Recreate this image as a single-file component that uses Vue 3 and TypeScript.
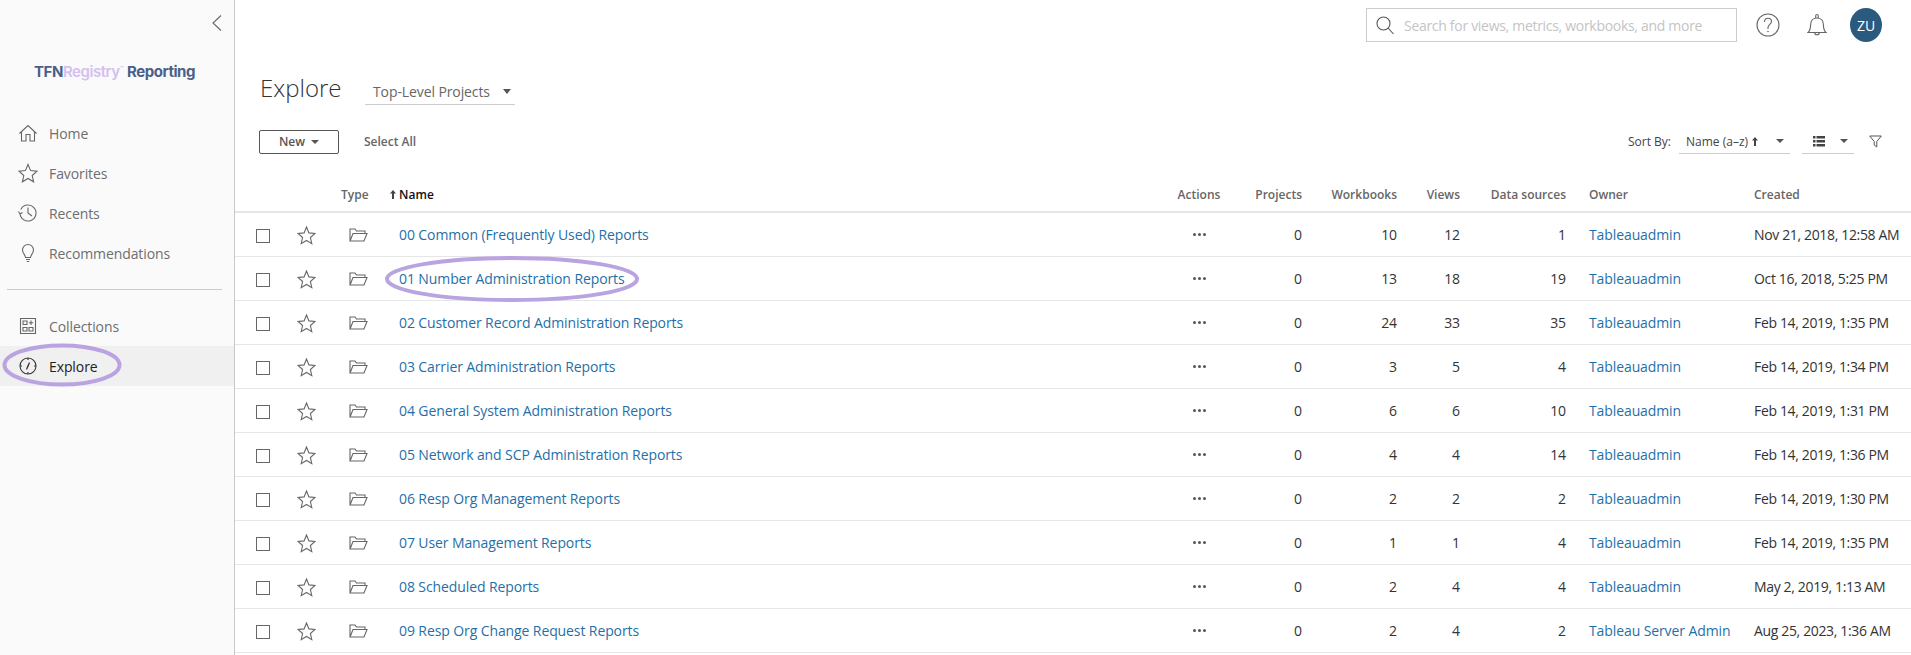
<script setup lang="ts">
interface Row {
  name: string; projects: number; workbooks: number; views: number; sources: number; owner: string; created: string;
}
const rows: Row[] = [
  { name: '00 Common (Frequently Used) Reports', projects: 0, workbooks: 10, views: 12, sources: 1, owner: 'Tableauadmin', created: 'Nov 21, 2018, 12:58 AM' },
  { name: '01 Number Administration Reports', projects: 0, workbooks: 13, views: 18, sources: 19, owner: 'Tableauadmin', created: 'Oct 16, 2018, 5:25 PM' },
  { name: '02 Customer Record Administration Reports', projects: 0, workbooks: 24, views: 33, sources: 35, owner: 'Tableauadmin', created: 'Feb 14, 2019, 1:35 PM' },
  { name: '03 Carrier Administration Reports', projects: 0, workbooks: 3, views: 5, sources: 4, owner: 'Tableauadmin', created: 'Feb 14, 2019, 1:34 PM' },
  { name: '04 General System Administration Reports', projects: 0, workbooks: 6, views: 6, sources: 10, owner: 'Tableauadmin', created: 'Feb 14, 2019, 1:31 PM' },
  { name: '05 Network and SCP Administration Reports', projects: 0, workbooks: 4, views: 4, sources: 14, owner: 'Tableauadmin', created: 'Feb 14, 2019, 1:36 PM' },
  { name: '06 Resp Org Management Reports', projects: 0, workbooks: 2, views: 2, sources: 2, owner: 'Tableauadmin', created: 'Feb 14, 2019, 1:30 PM' },
  { name: '07 User Management Reports', projects: 0, workbooks: 1, views: 1, sources: 4, owner: 'Tableauadmin', created: 'Feb 14, 2019, 1:35 PM' },
  { name: '08 Scheduled Reports', projects: 0, workbooks: 2, views: 4, sources: 4, owner: 'Tableauadmin', created: 'May 2, 2019, 1:13 AM' },
  { name: '09 Resp Org Change Request Reports', projects: 0, workbooks: 2, views: 4, sources: 2, owner: 'Tableau Server Admin', created: 'Aug 25, 2023, 1:36 AM' },
];
</script>

<template>
  <div class="app">
    <aside class="side">
      <div class="collapse">
        <svg width="12" height="18" viewBox="0 0 12 18"><path d="M10 1.500 2 9l8 7.500" fill="none" stroke="#666" stroke-width="1.100" /></svg>
      </div>
      <div class="logo"><span class="l1">TFN</span><span class="l2">Registry</span><sup class="tm">™</sup><span class="l1 l3">Reporting</span></div>
      <nav class="nav first">
        <a class="item">
          <svg width="20" height="20" viewBox="0 0 20 20"><path d="M1.500 10.500 10 2.500l8.500 8M3.500 9v9h4.500v-6.500h4V18h4.500V9" fill="none" stroke="#666" stroke-width="1.100" /></svg>
          <span>Home</span>
        </a>
        <a class="item">
          <svg width="20" height="20" viewBox="0 0 20 20"><path d="M10 1.500 12.600 7.600 19 8.200 14.200 12.500 15.600 18.800 10 15.500 4.400 18.800 5.800 12.500 1 8.200 7.400 7.600Z" fill="none" stroke="#666" stroke-width="1.100" /></svg>
          <span>Favorites</span>
        </a>
        <a class="item">
          <svg width="20" height="20" viewBox="0 0 20 20"><path d="M2.800 6.500A8 8 0 1 1 2 10M.5 8.500 2 11l2.500-1.500M10 4.500V10l4 3" fill="none" stroke="#666" stroke-width="1.100" /></svg>
          <span>Recents</span>
        </a>
        <a class="item">
          <svg width="20" height="20" viewBox="0 0 20 20"><path d="M7.500 14.500c0-2.500-3-4-3-7.500a5.500 5.500 0 0 1 11 0c0 3.500-3 5-3 7.500ZM8 16.500h4M8.800 18.500h2.400" fill="none" stroke="#666" stroke-width="1.100" /></svg>
          <span>Recommendations</span>
        </a>
      </nav>
      <div class="divider"></div>
      <nav class="nav">
        <a class="item">
          <svg width="20" height="20" viewBox="0 0 20 20"><path d="M2.500 2.500h15v15h-15ZM5 5h4v3.500H5ZM5 11.500h4V15H5ZM11 11.500h4V15h-4ZM13 4.500v4.500M10.800 6.800h4.400" fill="none" stroke="#666" stroke-width="1.100" /></svg>
          <span>Collections</span>
        </a>
        <a class="item active">
          <svg width="20" height="20" viewBox="0 0 20 20"><circle cx="10" cy="10" r="8" fill="none" stroke="#333" stroke-width="1.100" /><path d="M11.500 6.500 9.800 10l-1.300 3.500L10.200 10Z" fill="none" stroke="#333" stroke-width="1.100" /><path d="M10 2v2M10 16v2M2 10h2M16 10h2" stroke="#333" stroke-width="1.100" /></svg>
          <span>Explore</span>
        </a>
      </nav>
    </aside>

    <main class="main">
      <header class="top">
        <div class="search">
          <svg class="search-icon" width="18" height="19" viewBox="0 0 18 19"><circle cx="7.500" cy="7.500" r="6.500" fill="none" stroke="#555" stroke-width="1.100" /><path d="m12 12 5.500 6" stroke="#555" stroke-width="1.100" /></svg>
          <span>Search for views, metrics, workbooks, and more</span>
        </div>
        <svg class="help" width="24" height="24" viewBox="0 0 24 24"><circle cx="12" cy="12" r="11" fill="none" stroke="#666" stroke-width="1.100" /><path d="M8.500 9C8.500 6.500 10 5.300 12 5.300s3.500 1.300 3.500 3.200c0 2.800-3.500 3-3.500 6v1.500" fill="none" stroke="#666" stroke-width="1.100" /><circle cx="12" cy="18.500" r=".8" fill="#666" /></svg>
        <svg class="bell" width="20" height="24" viewBox="0 0 20 24"><path d="M1 19.500c2.500-2 2.500-5 2.700-8.500.2-3.500 2.600-6 6.300-6s6.100 2.500 6.300 6c.2 3.500.2 6.500 2.700 8.500ZM8.700 5V2.800a1.300 1.300 0 0 1 2.600 0V5M7.700 19.500a2.300 2.300 0 0 0 4.600 0" fill="none" stroke="#666" stroke-width="1.100" /></svg>
        <div class="avatar">ZU</div>
      </header>

      <div class="title-row">
        <h1>Explore</h1>
        <div class="project-select"><span>Top-Level Projects</span><i class="caret"></i></div>
      </div>

      <div class="toolbar">
        <button class="new">New <i class="caret small"></i></button>
        <span class="select-all">Select All</span>
        <div class="right-tools">
          <span class="sort-label">Sort By:</span>
          <div class="sort-select">
            <span class="sort-value">Name (a–z)
              <svg class="arrow" width="6" height="9" viewBox="0 0 6 9"><path d="M3 0 6 3.500H4V9H2V3.500H0Z" fill="#444" /></svg>
            </span>
            <i class="caret small"></i>
          </div>
          <div class="view-select">
            <svg width="12" height="11" viewBox="0 0 12 11"><path d="M0 0h2.500v2.500H0ZM3.500 0H12v2.500H3.500ZM0 4h2.500v2.500H0ZM3.500 4H12v2.500H3.500ZM0 8h2.500v2.500H0ZM3.500 8H12v2.500H3.500Z" fill="#444" /></svg>
            <i class="caret small"></i>
          </div>
          <svg class="filter" width="13" height="13" viewBox="0 0 13 13"><path d="M.7 1h11.600L7.800 6.500V12L5.200 10V6.500Z" fill="none" stroke="#555" /></svg>
        </div>
      </div>

      <section class="table">
        <div class="row head">
          <span></span>
          <span></span>
          <span>Type</span>
          <span class="name-head"><svg class="arrow" width="6" height="9" viewBox="0 0 6 9"><path d="M3 0 6 3.500H4V9H2V3.500H0Z" fill="#444" /></svg> Name</span>
          <span class="center">Actions</span>
          <span class="num">Projects</span>
          <span class="num">Workbooks</span>
          <span class="num">Views</span>
          <span class="num">Data sources</span>
          <span class="owner-head">Owner</span>
          <span>Created</span>
        </div>
        <div v-for="r in rows" :key="r.name" class="row">
          <span class="check"><i></i></span>
          <svg class="star" width="19" height="19" viewBox="0 0 19 19"><path d="M9.500 1 11.900 6.900 18 7.400 13.400 11.500 14.800 17.700 9.500 14.500 4.200 17.700 5.600 11.500 1 7.400 7.100 6.900Z" fill="none" stroke="#666" stroke-width="1.100" /></svg>
          <svg class="folder" width="19" height="14" viewBox="0 0 19 14"><path d="M1 13V1h5l1.500 2H16v2.500M1 13h14l3-7.500H4L1 13Z" fill="none" stroke="#666" stroke-width="1.100" /></svg>
          <a class="link">{{ r.name }}</a>
          <span class="dots"><i></i><i></i><i></i></span>
          <span class="num val">{{ r.projects }}</span>
          <span class="num val">{{ r.workbooks }}</span>
          <span class="num val">{{ r.views }}</span>
          <span class="num val">{{ r.sources }}</span>
          <a class="link owner">{{ r.owner }}</a>
          <span class="val created">{{ r.created }}</span>
        </div>
      </section>
    </main>

    <svg class="mark mark-nav" width="122" height="46" viewBox="0 0 122 46"><ellipse cx="61" cy="23" rx="57.500" ry="19.500" fill="none" stroke="#b9a3e0" stroke-width="4" /></svg>
    <svg class="mark mark-row" width="256" height="48" viewBox="0 0 256 48"><ellipse cx="128" cy="24" rx="125" ry="21" fill="none" stroke="#b9a3e0" stroke-width="4" /></svg>
  </div>
</template>

<style scoped>
.app {
  position: relative;
  display: flex;
  width: 1911px;
  height: 655px;
  overflow: hidden;
  background: #fff;
  font-family: "Open Sans", "Noto Sans", sans-serif;
  color: #333;
}
.side {
  width: 234px;
  flex: none;
  background: #fafafa;
  border-right: 1px solid #c8c8c8;
}
.collapse {
  display: flex;
  justify-content: flex-end;
  padding: 14px 11px 0 0;
  height: 32px;
}
.logo {
  display: flex;
  align-items: baseline;
  margin: 16px 0 0 34px;
  height: 30px;
  font: 700 15px "Inter", sans-serif;
  letter-spacing: -0.45px;
}
.l1 { color: #4a5f8a; }
.l2 { color: #d3c0f0; font-weight: 600; }
.l3 { margin-left: 4px; }
.tm { color: #d3c0f0; font-size: 6px; align-self: flex-start; margin-top: 3px; }
.nav { display: flex; flex-direction: column; }
.first { margin-top: 21px; }
.item {
  display: flex;
  align-items: center;
  gap: 11px;
  height: 40px;
  padding-left: 18px;
  font-size: 14px;
  letter-spacing: -0.1px;
  color: #6e6e6e;
}
.active { background: #f0f0f0; color: #222; }
.divider {
  height: 1px;
  background: #ccc;
  margin: 16px 12px 16px 7px;
}
.main { flex: 1; min-width: 0; display: flex; flex-direction: column; }
.top {
  display: flex;
  align-items: center;
  justify-content: flex-end;
  height: 50px;
  padding-right: 29px;
}
.search {
  display: flex;
  align-items: center;
  gap: 10px;
  box-sizing: border-box;
  width: 371px;
  height: 34px;
  border: 1px solid #ccc;
  padding-left: 9px;
  color: #c4c4c4;
  font-size: 14px;
  letter-spacing: -0.3px;
  white-space: nowrap;
  overflow: hidden;
}
.search-icon { flex: none; }
.help { margin-left: 19px; }
.bell { margin-left: 27px; }
.avatar {
  width: 32px;
  height: 34px;
  margin-left: 23px;
  border-radius: 50%;
  background: #2b5a7f;
  color: #fff;
  display: flex;
  align-items: center;
  justify-content: center;
  font-size: 14px;
}
.title-row {
  display: flex;
  align-items: flex-end;
  padding-left: 25px;
  height: 55px;
}
h1 {
  margin: 0;
  font-size: 24px;
  font-weight: 300;
  line-height: 34px;
  color: #333;
  width: 105px;
}
.project-select {
  display: flex;
  align-items: center;
  justify-content: space-between;
  box-sizing: border-box;
  width: 150px;
  height: 26px;
  padding: 0 4px 0 8px;
  border-bottom: 1px solid #ccc;
  font-size: 14px;
  letter-spacing: -0.1px;
  color: #666;
}
.caret {
  width: 0;
  height: 0;
  border-left: 4px solid transparent;
  border-right: 4px solid transparent;
  border-top: 5px solid #555;
  display: inline-block;
}
.caret.small { border-top-width: 4px; }
.toolbar {
  display: flex;
  align-items: center;
  height: 23px;
  margin-top: 25px;
  padding-left: 24px;
}
.new {
  box-sizing: border-box;
  width: 80px;
  height: 24px;
  border: 1px solid #555;
  border-radius: 2px;
  background: #fff;
  font: 600 12px "Open Sans", sans-serif;
  color: #555;
  padding: 0;
}
.new .caret { vertical-align: 2px; margin-left: 3px; }
.select-all { margin-left: 25px; font-size: 12px; font-weight: 600; color: #666; }
.right-tools {
  margin-left: auto;
  display: flex;
  align-items: center;
  padding-right: 29px;
}
.sort-label { font-size: 12px; color: #444; margin-right: 8px; }
.sort-select {
  display: flex;
  align-items: center;
  justify-content: space-between;
  box-sizing: border-box;
  width: 111px;
  height: 25px;
  padding: 0 6px 0 7px;
  border-bottom: 1px solid #ccc;
  font-size: 12px;
  color: #444;
}
.sort-value { display: flex; align-items: center; gap: 4px; }
.view-select {
  display: flex;
  align-items: center;
  justify-content: space-between;
  box-sizing: border-box;
  width: 52px;
  height: 25px;
  margin-left: 12px;
  padding: 0 6px 0 11px;
  border-bottom: 1px solid #ccc;
}
.filter { margin-left: 15px; }
.table { margin-top: 26px; }
.row {
  display: grid;
  grid-template-columns: 50px 56px 58px 750px 100px 53px 95px 63px 106px 188px 1fr;
  align-items: center;
  height: 44px;
  border-bottom: 1px solid #e6e6e6;
  box-sizing: border-box;
  font-size: 14px;
  letter-spacing: -0.1px;
}
.head {
  height: 34px;
  padding-bottom: 2px;
  border-bottom-width: 2px;
  font-size: 12px;
  font-weight: 600;
  letter-spacing: 0;
  color: #666;
}
.name-head { color: #111; margin-left: -9px; }
.center { text-align: center; }
.num { text-align: right; }
.owner-head { padding-left: 23px; }
.check { padding: 2px 0 0 21px; display: flex; }
.check i {
  width: 12px;
  height: 12px;
  border: 1px solid #666;
  display: block;
}
.star { margin: 1px 0 0 12px; }
.folder { margin: 1px 0 0 8px; }
.link { color: #1f6fa8; white-space: nowrap; }
.owner { padding-left: 23px; }
.val { color: #333; }
.created { letter-spacing: -0.35px; white-space: nowrap; }
.dots { display: flex; justify-content: center; gap: 2px; }
.dots i { width: 3px; height: 3px; border-radius: 50%; background: #555; }
.mark { position: absolute; pointer-events: none; }
.mark-nav { left: 1px; top: 342px; }
.mark-row { left: 384px; top: 255px; }
</style>

<style>
html, body { margin: 0; background: #fff; }
</style>
